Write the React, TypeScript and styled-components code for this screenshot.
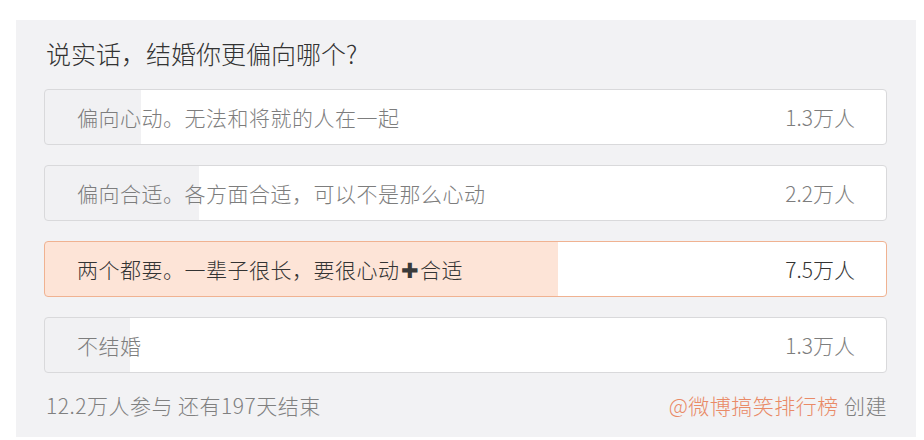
import React from "react";
import styled, { createGlobalStyle } from "styled-components";

const Global = createGlobalStyle`
  html, body { margin: 0; padding: 0; background: #ffffff; }
  body { font-family: "Noto Sans CJK SC", "Noto Sans", sans-serif; }
`;

const Panel = styled.section`
  box-sizing: border-box;
  margin: 20px 0 0 16px;
  width: 900px;
  height: 417px;
  background: #f2f2f4;
  padding: 17px 29px 0 28px;
  display: flex;
  flex-direction: column;
`;

const Title = styled.h1`
  margin: 0 0 0 2px;
  font-size: 25px;
  line-height: 32px;
  font-weight: 300;
  color: #333333;
`;

const Options = styled.div`
  margin-top: 20px;
  display: flex;
  flex-direction: column;
  gap: 20px;
`;

const Option = styled.div<{ $pct: number; $chosen?: boolean }>`
  box-sizing: border-box;
  height: 56px;
  border-radius: 4px;
  border: 1px solid ${(p) => (p.$chosen ? "#f0b291" : "#d9d9db")};
  background: linear-gradient(
    to right,
    ${(p) => (p.$chosen ? "#fde4d7" : "#f1f1f3")} 0,
    ${(p) => (p.$chosen ? "#fde4d7" : "#f1f1f3")} ${(p) => p.$pct}%,
    #ffffff ${(p) => p.$pct}%,
    #ffffff 100%
  );
  display: flex;
  align-items: center;
  justify-content: space-between;
  padding: 0 31px 0 32px;
  font-size: 21px;
  font-weight: 300;
  letter-spacing: 0.5px;
  color: ${(p) => (p.$chosen ? "#333333" : "#7d7d7d")};
`;

const Label = styled.span`
  white-space: nowrap;
`;

const Plus = styled.span`
  font-family: "DejaVu Sans", sans-serif;
  font-size: 21px;
  color: #3a3a3a;
  margin: 0 1px;
`;

const Count = styled.span`
  white-space: nowrap;
  letter-spacing: 0;
`;

const Footer = styled.div`
  margin-top: 18px;
  display: flex;
  justify-content: space-between;
  align-items: center;
  font-size: 21px;
  font-weight: 300;
  letter-spacing: 0.5px;
  line-height: 28px;
  color: #808080;
  padding-left: 2px;
`;

const Creator = styled.span`
  color: #e98a67;
`;

type Opt = { label: React.ReactNode; count: string; pct: number; chosen?: boolean };

const options: Opt[] = [
  { label: "偏向心动。无法和将就的人在一起", count: "1.3万人", pct: 11.4 },
  { label: "偏向合适。各方面合适，可以不是那么心动", count: "2.2万人", pct: 18.3 },
  {
    label: (
      <>
        两个都要。一辈子很长，要很心动<Plus>✚</Plus>合适
      </>
    ),
    count: "7.5万人",
    pct: 61,
    chosen: true,
  },
  { label: "不结婚", count: "1.3万人", pct: 10.1 },
];

export default function App() {
  return (
    <>
      <Global />
      <Panel>
        <Title>说实话，结婚你更偏向哪个?</Title>
        <Options>
          {options.map((o, i) => (
            <Option key={i} $pct={o.pct} $chosen={o.chosen}>
              <Label>{o.label}</Label>
              <Count>{o.count}</Count>
            </Option>
          ))}
        </Options>
        <Footer>
          <span>12.2万人参与 还有197天结束</span>
          <span>
            <Creator>@微博搞笑排行榜</Creator> 创建
          </span>
        </Footer>
      </Panel>
    </>
  );
}
